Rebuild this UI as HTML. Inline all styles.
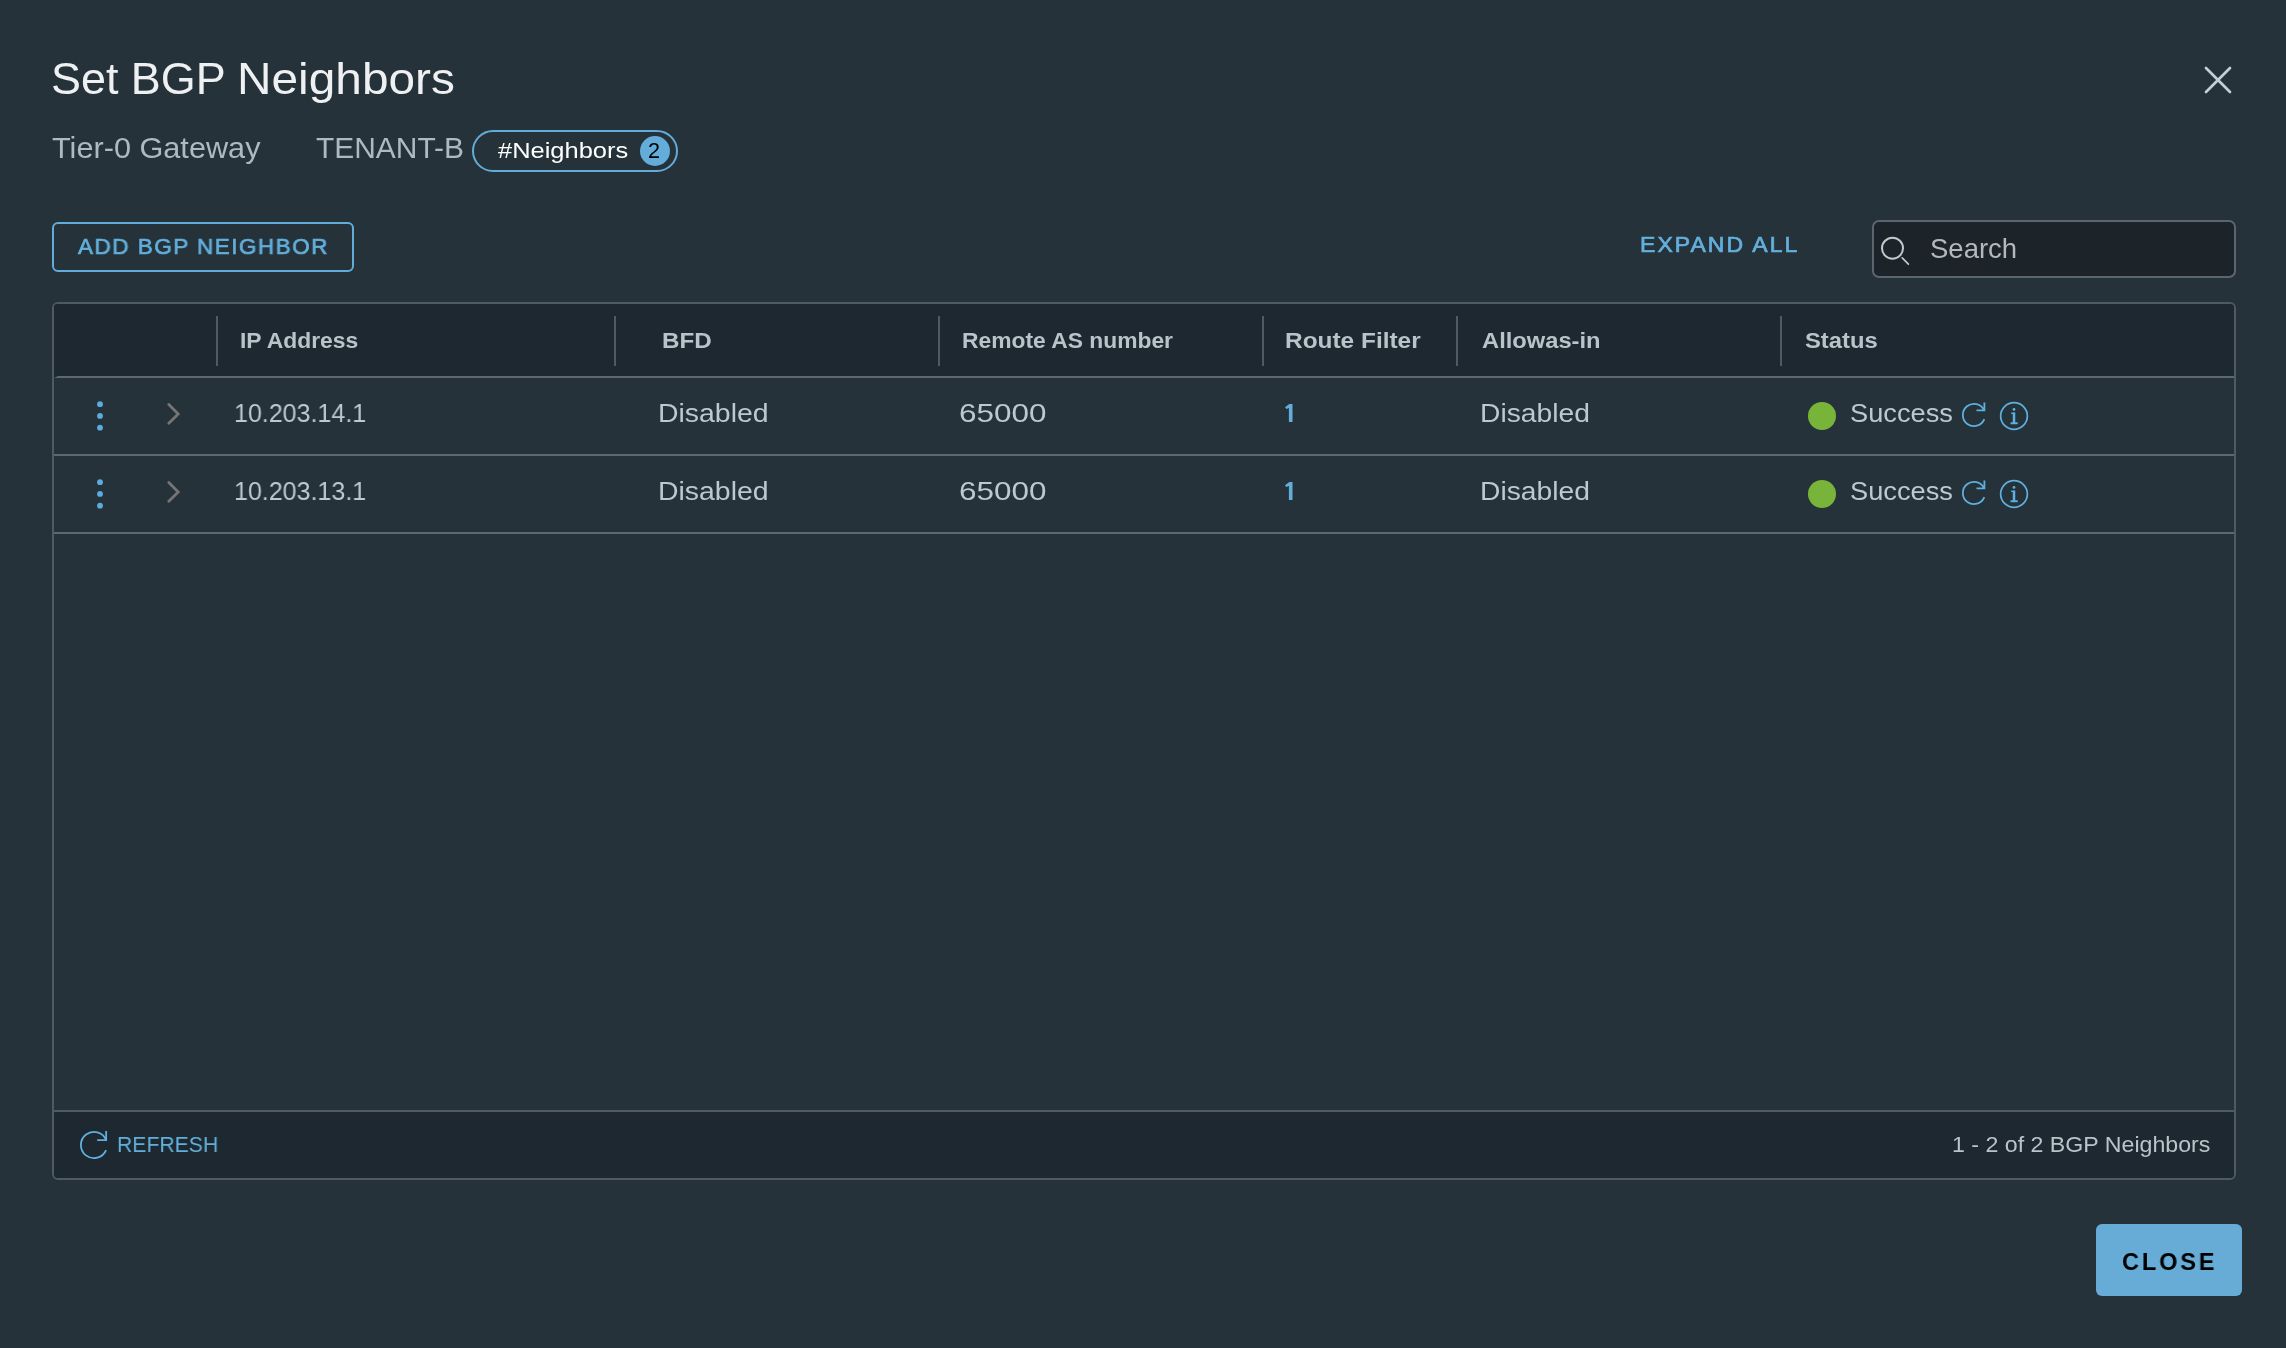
<!DOCTYPE html>
<html><head><meta charset="utf-8">
<style>
html,body{margin:0;padding:0;}
body{width:2286px;height:1348px;overflow:hidden;background:#25323a;position:relative;font-family:"Liberation Sans",sans-serif;}
.a{position:absolute;white-space:nowrap;line-height:1;}
.t{position:absolute;white-space:nowrap;line-height:1;transform-origin:0 0;will-change:transform;}
#pill{left:472px;top:130px;width:202px;height:38px;border:2px solid #62acd8;border-radius:22px;}
#badge{left:640px;top:136px;width:30px;height:30px;border-radius:50%;background:#64acd9;}
#addbtn{left:52px;top:222px;width:298px;height:46px;border:2px solid #62acd8;border-radius:6px;}
#search{left:1872px;top:220px;width:360px;height:54px;border:2px solid #5b6570;border-radius:7px;background:#1c2329;}
#grid{left:52px;top:302px;width:2180px;height:874px;border:2px solid #4e5a66;border-radius:6px;overflow:hidden;background:#25323a;}
#ghead{left:0;top:0;width:2176px;height:72px;background:#1d2830;border-bottom:2px solid #5e6874;border-left:4px solid #1d2830;}
.sep{position:absolute;top:12px;width:2px;height:50px;background:#4e5a66;}
.row{position:absolute;left:0;width:2180px;height:76px;border-bottom:2px solid #5e6874;}
#gfoot{left:0;top:806px;width:2180px;height:68px;background:#1d2830;border-top:2px solid #4e5a66;}
#closebtn{left:2096px;top:1224px;width:146px;height:72px;border-radius:6px;background:#67acd7;}
</style></head><body>
<svg class="a" style="left:2200px;top:62px" width="36" height="36" viewBox="0 0 36 36"><path d="M6 6 L30 30 M30 6 L6 30" stroke="#c5ced5" stroke-width="2.7" stroke-linecap="round" fill="none"/></svg>
<div id="pill" class="a"></div>
<div id="badge" class="a"></div>
<div class="a" style="left:648px;top:140px;font-size:21.6px;color:#000;will-change:transform;">2</div>
<div id="addbtn" class="a"></div>
<div id="search" class="a"></div>
<svg class="a" style="left:1878px;top:234px" width="36" height="36" viewBox="0 0 36 36"><circle cx="14.5" cy="14.2" r="10.5" stroke="#c0c9d0" stroke-width="2" fill="none"/><path d="M24.2 23.9 L30.4 30.1" stroke="#c0c9d0" stroke-width="1.7" stroke-linecap="round" fill="none"/></svg>

<div id="grid" class="a">
  <div id="ghead" class="a">
    <div class="sep" style="left:158px"></div>
    <div class="sep" style="left:556px"></div>
    <div class="sep" style="left:880px"></div>
    <div class="sep" style="left:1204px"></div>
    <div class="sep" style="left:1398px"></div>
    <div class="sep" style="left:1722px"></div>
  </div>
  <div class="row" style="top:74px"></div>
  <div class="row" style="top:152px"></div>
  <div id="gfoot" class="a"></div>
</div>
<svg class="a" style="left:94px;top:398px" width="12" height="36" viewBox="0 0 12 36"><circle cx="6" cy="6.2" r="2.9" fill="#5aade0"/><circle cx="6" cy="17.9" r="2.9" fill="#5aade0"/><circle cx="6" cy="29.7" r="2.9" fill="#5aade0"/></svg>
<svg class="a" style="left:160px;top:398px" width="28" height="32" viewBox="0 0 28 32"><path d="M8.8 6.5 L18.2 15.9 L8.8 25.3" stroke="#757575" stroke-width="2.8" stroke-linecap="round" stroke-linejoin="miter" fill="none"/></svg>
<svg class="a" style="left:1280px;top:400px" width="20" height="26" viewBox="0 0 20 26"><polygon points="5,7.3 9.3,3.9 12.5,3.9 12.5,22 8.9,22 8.9,8.1 6.4,8.9" fill="#63addb"/></svg>
<div class="a" style="left:1808px;top:402px;width:28px;height:28px;border-radius:50%;background:#79b43a"></div>
<svg class="a" style="left:1958.7px;top:400px" width="30" height="30" viewBox="0 0 30 30"><path d="M25.34 19.18 A11.15 11.15 0 1 1 25.19 10.46" stroke="#5fb0de" stroke-width="1.8" fill="none"/><path d="M25.4 2.4 V10.46 H17.5" stroke="#5fb0de" stroke-width="1.8" fill="none"/></svg>
<svg class="a" style="left:1997.95px;top:399.8px" width="32" height="32" viewBox="0 0 32 32"><circle cx="16" cy="16" r="13.35" stroke="#5fb0de" stroke-width="1.7" fill="none"/><circle cx="16" cy="9.4" r="1.4" fill="#5fb0de"/><rect x="14.75" y="12.4" width="2.5" height="11.7" fill="#5fb0de"/><rect x="13.1" y="12.6" width="1.8" height="1.4" fill="#5fb0de"/><rect x="12.55" y="22.3" width="7.2" height="1.9" fill="#5fb0de"/></svg>
<svg class="a" style="left:94px;top:476px" width="12" height="36" viewBox="0 0 12 36"><circle cx="6" cy="6.2" r="2.9" fill="#5aade0"/><circle cx="6" cy="17.9" r="2.9" fill="#5aade0"/><circle cx="6" cy="29.7" r="2.9" fill="#5aade0"/></svg>
<svg class="a" style="left:160px;top:476px" width="28" height="32" viewBox="0 0 28 32"><path d="M8.8 6.5 L18.2 15.9 L8.8 25.3" stroke="#757575" stroke-width="2.8" stroke-linecap="round" stroke-linejoin="miter" fill="none"/></svg>
<svg class="a" style="left:1280px;top:478px" width="20" height="26" viewBox="0 0 20 26"><polygon points="5,7.3 9.3,3.9 12.5,3.9 12.5,22 8.9,22 8.9,8.1 6.4,8.9" fill="#63addb"/></svg>
<div class="a" style="left:1808px;top:480px;width:28px;height:28px;border-radius:50%;background:#79b43a"></div>
<svg class="a" style="left:1958.7px;top:478px" width="30" height="30" viewBox="0 0 30 30"><path d="M25.34 19.18 A11.15 11.15 0 1 1 25.19 10.46" stroke="#5fb0de" stroke-width="1.8" fill="none"/><path d="M25.4 2.4 V10.46 H17.5" stroke="#5fb0de" stroke-width="1.8" fill="none"/></svg>
<svg class="a" style="left:1997.95px;top:477.8px" width="32" height="32" viewBox="0 0 32 32"><circle cx="16" cy="16" r="13.35" stroke="#5fb0de" stroke-width="1.7" fill="none"/><circle cx="16" cy="9.4" r="1.4" fill="#5fb0de"/><rect x="14.75" y="12.4" width="2.5" height="11.7" fill="#5fb0de"/><rect x="13.1" y="12.6" width="1.8" height="1.4" fill="#5fb0de"/><rect x="12.55" y="22.3" width="7.2" height="1.9" fill="#5fb0de"/></svg>
<svg class="a" style="left:75.8px;top:1127px" width="36" height="36" viewBox="0 0 36 36"><path d="M30.08 23.08 A13.1 13.1 0 1 1 30.15 13.1" stroke="#5fb0de" stroke-width="1.8" fill="none"/><path d="M30.15 4 V13.1 H21.2" stroke="#5fb0de" stroke-width="1.8" fill="none"/></svg>

<div id="closebtn" class="a"></div>
<div class="t" style="left:51.49px;top:57.30px;font-size:44.7px;color:#eef0f2;transform:scaleX(1.0047);">Set BGP</div>
<div class="t" style="left:236.92px;top:57.30px;font-size:44.7px;color:#eef0f2;transform:scaleX(1.0697);">Neighbors</div>
<div class="t" style="left:51.93px;top:134.30px;font-size:28.6px;color:#adbac3;transform:scaleX(1.0725);">Tier-0 Gateway</div>
<div class="t" style="left:316.27px;top:134.10px;font-size:29px;color:#adbac3;transform:scaleX(1.0319);">TENANT-B</div>
<div class="t" style="left:497.80px;top:140.00px;font-size:22px;color:#ffffff;transform:scaleX(1.1571);">#Neighbors</div>
<div class="t" style="left:78.30px;top:235.20px;font-size:22.8px;color:#63afdc;-webkit-text-stroke:0.7px #63afdc;letter-spacing:1.5px;transform:scaleX(0.9869);">ADD BGP NEIGHBOR</div>
<div class="t" style="left:1640.48px;top:234.40px;font-size:22.6px;color:#63afdc;-webkit-text-stroke:0.7px #63afdc;letter-spacing:2px;transform:scaleX(1.0183);">EXPAND ALL</div>
<div class="t" style="left:1929.58px;top:236.20px;font-size:26.9px;color:#b3b8bc;transform:scaleX(1.0229);">Search</div>
<div class="t" style="left:240.46px;top:330.00px;font-size:22.4px;color:#b9c3ca;font-weight:bold;transform:scaleX(1.0221);">IP Address</div>
<div class="t" style="left:662.24px;top:330.00px;font-size:22.4px;color:#b9c3ca;font-weight:bold;transform:scaleX(1.0814);">BFD</div>
<div class="t" style="left:961.96px;top:330.00px;font-size:22.4px;color:#b9c3ca;font-weight:bold;transform:scaleX(1.0195);">Remote AS number</div>
<div class="t" style="left:1285.02px;top:330.00px;font-size:22.4px;color:#b9c3ca;font-weight:bold;transform:scaleX(1.0910);">Route Filter</div>
<div class="t" style="left:1481.74px;top:330.00px;font-size:22.4px;color:#b9c3ca;font-weight:bold;transform:scaleX(1.0591);">Allowas-in</div>
<div class="t" style="left:1805.34px;top:330.00px;font-size:22.4px;color:#b9c3ca;font-weight:bold;transform:scaleX(1.0627);">Status</div>
<div class="t" style="left:117.03px;top:1134.20px;font-size:22.6px;color:#63afdc;transform:scaleX(0.9375);">REFRESH</div>
<div class="t" style="left:1952.18px;top:1133.30px;font-size:22.9px;color:#b9c3ca;transform:scaleX(1.0119);">1 - 2 of 2 BGP Neighbors</div>
<div class="t" style="left:2122.14px;top:1250.00px;font-size:24.5px;color:#000000;font-weight:bold;letter-spacing:3px;transform:scaleX(0.9596);">CLOSE</div>
<div class="t" style="left:234.30px;top:400.20px;font-size:26.4px;color:#bdc8d0;transform:scaleX(0.9478);">10.203.14.1</div>
<div class="t" style="left:658.05px;top:400.20px;font-size:26.4px;color:#bdc8d0;transform:scaleX(1.0768);">Disabled</div>
<div class="t" style="left:959.41px;top:400.20px;font-size:26.4px;color:#bdc8d0;transform:scaleX(1.1915);">65000</div>
<div class="t" style="left:1479.76px;top:400.20px;font-size:26.4px;color:#bdc8d0;transform:scaleX(1.0697);">Disabled</div>
<div class="t" style="left:1849.83px;top:400.00px;font-size:26.3px;color:#bdc8d0;transform:scaleX(1.0354);">Success</div>
<div class="t" style="left:234.30px;top:478.20px;font-size:26.4px;color:#bdc8d0;transform:scaleX(0.9478);">10.203.13.1</div>
<div class="t" style="left:658.05px;top:478.20px;font-size:26.4px;color:#bdc8d0;transform:scaleX(1.0768);">Disabled</div>
<div class="t" style="left:959.41px;top:478.20px;font-size:26.4px;color:#bdc8d0;transform:scaleX(1.1915);">65000</div>
<div class="t" style="left:1479.76px;top:478.20px;font-size:26.4px;color:#bdc8d0;transform:scaleX(1.0697);">Disabled</div>
<div class="t" style="left:1849.83px;top:478.00px;font-size:26.3px;color:#bdc8d0;transform:scaleX(1.0354);">Success</div>
</body></html>
